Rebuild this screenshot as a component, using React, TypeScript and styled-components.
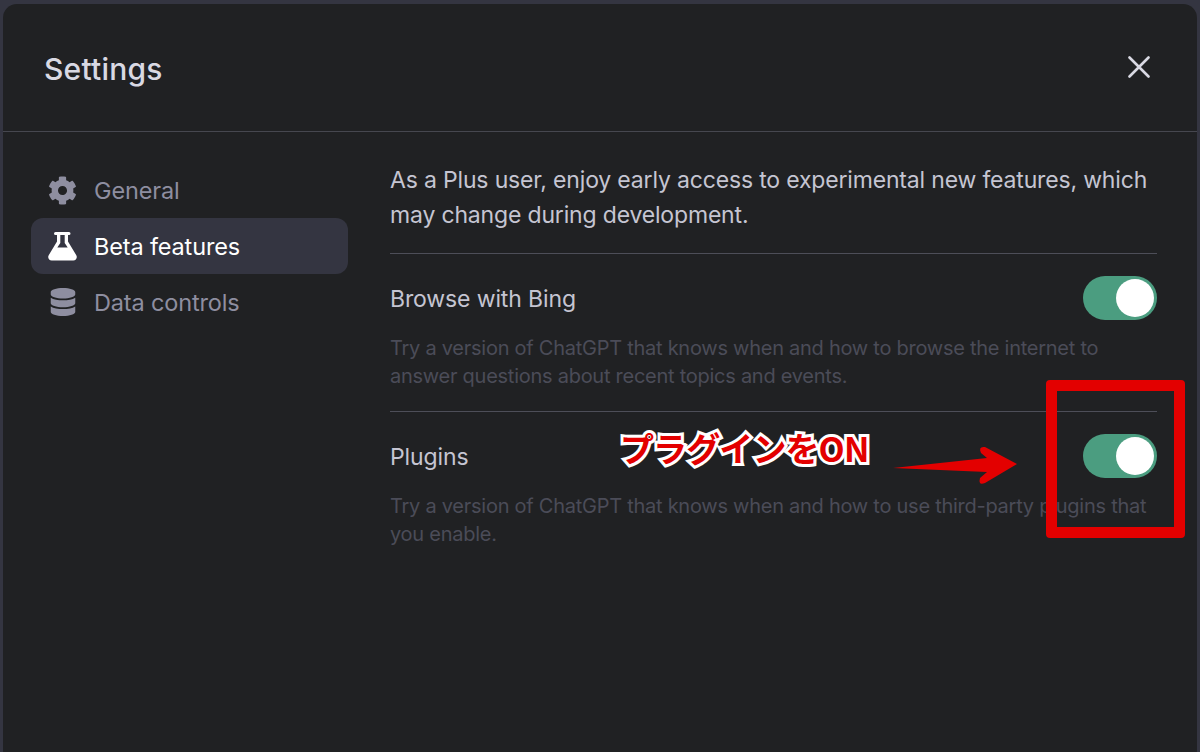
import React from "react";
import styled, { createGlobalStyle } from "styled-components";
import { FaCog, FaDatabase } from "react-icons/fa";

const Global = createGlobalStyle`
  html, body { margin: 0; padding: 0; background: #343541; overflow: hidden; }
  * { box-sizing: border-box; }
`;
const Page = styled.div`
  position: relative;
  width: 1200px;
  height: 752px;
  padding: 4px 3px 0;
  overflow: hidden;
  background: #343541;
  font-family: Inter, "Noto Sans", sans-serif;
`;
const Panel = styled.section`
  height: 760px;
  background: #202123;
  border-radius: 14px;
  display: flex;
  flex-direction: column;
`;
const Header = styled.header`
  height: 128px;
  flex: none;
  border-bottom: 1px solid #46474f;
  display: flex;
  align-items: center;
  justify-content: space-between;
  padding: 0 47px 0 41px;
`;
const Title = styled.h2`
  margin: 2px 0 0;
  font-size: 30px;
  font-weight: 500;
  letter-spacing: 0.2px;
  color: #d9d9e3;
`;
const Close = styled.button`
  display: flex;
  padding: 0;
  margin-bottom: 1px;
  border: 0;
  background: none;
  color: #d9d9e3;
`;
const Body = styled.div`
  display: flex;
  padding-top: 30px;
`;
const Sidebar = styled.nav`
  width: 317px;
  margin-left: 28px;
  flex: none;
  display: flex;
  flex-direction: column;
`;
const Item = styled.div<{ $active?: boolean }>`
  height: 56px;
  display: flex;
  align-items: center;
  gap: 17px;
  padding-left: 17px;
  border-radius: 12px;
  font-size: 23.5px;
  letter-spacing: -0.15px;
  background: ${(p) => (p.$active ? "#343541" : "transparent")};
  color: ${(p) => (p.$active ? "#ffffff" : "#8e8ea0")};
`;
const ItemLabel = styled.span`
  margin-bottom: 1px;
  padding-top: 1px;
`;
const IconBox = styled.span`
  width: 29px;
  height: 29px;
  flex: none;
  display: flex;
  align-items: center;
  justify-content: center;
`;
const Content = styled.main`
  width: 767px;
  margin-left: 42px;
  display: flex;
  flex-direction: column;
`;
const Intro = styled.p`
  margin: 0;
  height: 92px;
  padding-top: 1px;
  border-bottom: 1px solid #4d4e58;
  font-size: 23px;
  line-height: 35px;
  letter-spacing: -0.17px;
  color: #c5c5d2;
`;
const Setting = styled.div`
  padding: 22px 0 21px;
  & + & {
    border-top: 1px solid #4d4e58;
  }
`;
const Row = styled.div`
  height: 44px;
  display: flex;
  align-items: center;
  justify-content: space-between;
`;
const Label = styled.span`
  padding-top: 2px;
  font-size: 23px;
  letter-spacing: -0.12px;
  color: #c5c5d2;
`;
const Switch = styled.span`
  width: 74px;
  height: 44px;
  border-radius: 22px;
  background: #4b9d80;
  display: flex;
  align-items: center;
  justify-content: flex-end;
  padding-right: 3px;
`;
const Knob = styled.span`
  width: 38px;
  height: 38px;
  border-radius: 50%;
  background: #ffffff;
`;
const Description = styled.p`
  margin: 14px 0 0;
  font-size: 20px;
  line-height: 28px;
  letter-spacing: -0.26px;
  color: #4b4c58;
`;
const Callout = styled.div`
  position: absolute;
  left: 1046px;
  top: 380px;
  width: 139px;
  height: 158px;
  border: 11px solid #e30000;
  border-radius: 4px;
`;
const Note = styled.div`
  position: absolute;
  left: 620px;
  top: 425px;
  font-family: "Noto Sans CJK JP", sans-serif;
  font-size: 34px;
  line-height: 46px;
  font-weight: 700;
  white-space: nowrap;
  letter-spacing: -0.9px;
  color: #e30000;
  -webkit-text-stroke: 6px #ffffff;
  paint-order: stroke fill;
`;
const Arrow = styled.svg`
  position: absolute;
  left: 890px;
  top: 444px;
`;

const Flask = () => (
  <svg width="29" height="29" viewBox="0 0 29 29" fill="currentColor">
    <path
      fillRule="evenodd"
      d="M7.500 0h13.500a1.200 1.200 0 0 1 0 3H20v6.500l8.300 13.800C29.700 25.700 28 28.500 25.300 28.500H3.700C1 28.500-.7 25.700.7 23.300L9 9.500V3H7.500a1.200 1.200 0 0 1 0-3ZM12.300 3v8l-3 4.500h10.400l-3-4.500V3Z"
    />
  </svg>
);

const CloseIcon = () => (
  <svg width="22" height="22" viewBox="0 0 22 22" fill="none" stroke="currentColor" strokeWidth="2.6" strokeLinecap="round">
    <path d="M1.500 1.500l19 19M20.500 1.500l-19 19" />
  </svg>
);

export default function App() {
  return (
    <>
      <Global />
      <Page>
        <Panel>
          <Header>
            <Title>Settings</Title>
            <Close aria-label="Close"><CloseIcon /></Close>
          </Header>
          <Body>
            <Sidebar>
              <Item><IconBox><FaCog size={29} /></IconBox><ItemLabel>General</ItemLabel></Item>
              <Item $active><IconBox><Flask /></IconBox><ItemLabel>Beta features</ItemLabel></Item>
              <Item><IconBox><FaDatabase size={28} /></IconBox><ItemLabel>Data controls</ItemLabel></Item>
            </Sidebar>
            <Content>
              <Intro>As a Plus user, enjoy early access to experimental new features, which may change during development.</Intro>
              <Setting>
                <Row><Label>Browse with Bing</Label><Switch><Knob /></Switch></Row>
                <Description>Try a version of ChatGPT that knows when and how to browse the internet to answer questions about recent topics and events.</Description>
              </Setting>
              <Setting>
                <Row><Label>Plugins</Label><Switch><Knob /></Switch></Row>
                <Description>Try a version of ChatGPT that knows when and how to use third-party plugins that you enable.</Description>
              </Setting>
            </Content>
          </Body>
        </Panel>
        <Callout />
        <Note>プラグインをON</Note>
        <Arrow width="130" height="44" viewBox="0 0 130 44">
          <path d="M3 24 L97 14 L91 9 Q88 2 95 3 L127 20 L95 39 Q88 42 90 34 L97 28 Z" fill="#e30000" />
        </Arrow>
      </Page>
    </>
  );
}
